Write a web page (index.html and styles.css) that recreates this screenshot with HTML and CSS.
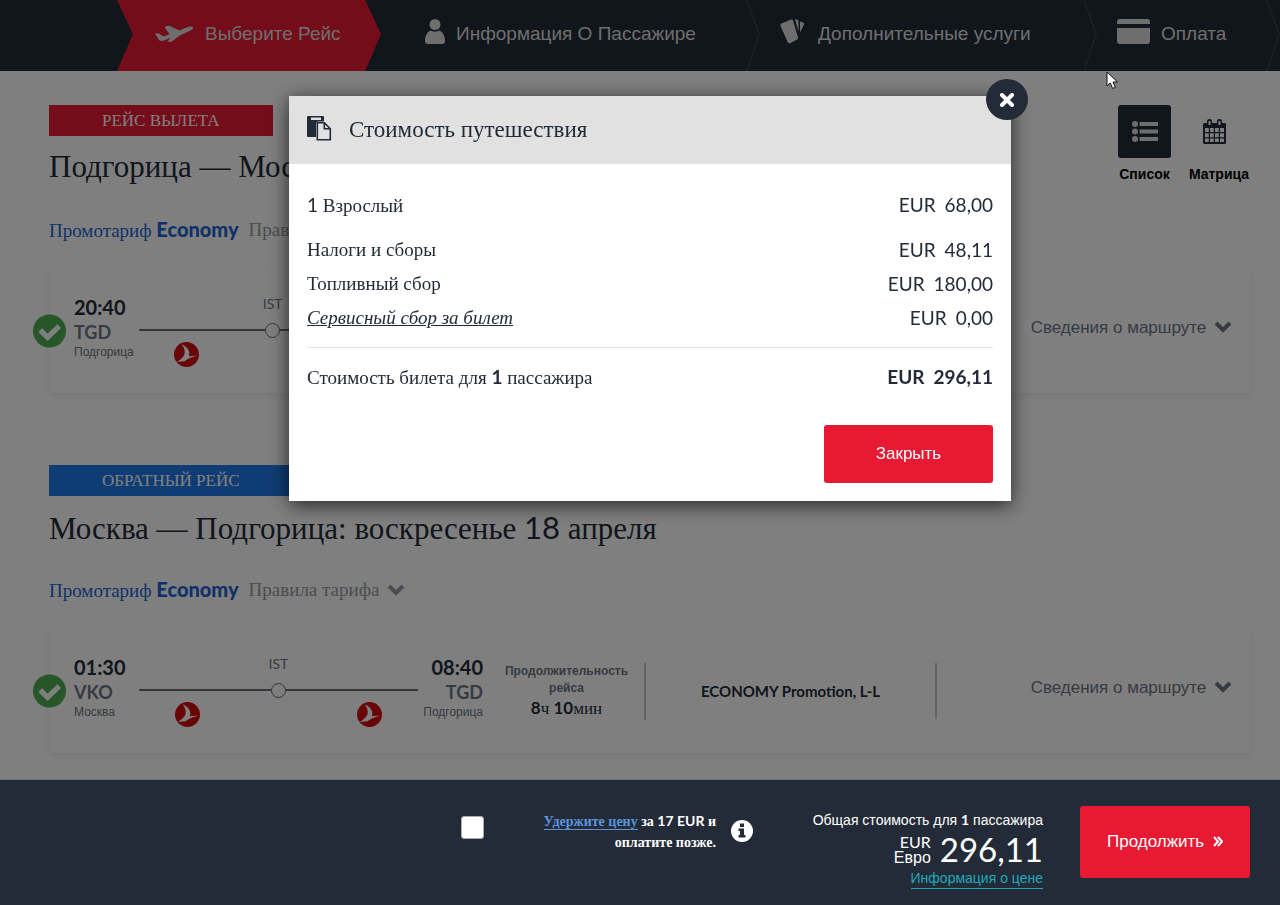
FILE: index.html
```html
<!DOCTYPE html>
<html lang="ru">
<head>
	<meta charset="utf-8">
	<meta name="viewport" content="width=device-width, initial-scale=1">
	<title>Выберите рейс</title>
	<link rel="stylesheet" href="styles.css">
</head>
<body>
	<!-- shared icons -->
	<svg class="sprite" aria-hidden="true">
		<symbol id="check" viewBox="0 0 34 34">
			<circle cx="17" cy="17" r="17" fill="#4fae53"/>
			<path d="M7.500 16l7.500 7.500L27 12" fill="none" stroke="#fff" stroke-width="5.500"/>
		</symbol>
		<symbol id="airline" viewBox="0 0 25 25">
			<circle cx="12.500" cy="12.500" r="12.500" fill="#d2090f"/>
			<path d="M7.500 2.500C13.500 4.500 16.500 9 15 14.200L23.500 13.500C18 15 13.500 16.500 10.500 19.200L2.500 20C6 18 9.500 15.500 10.500 12C11.300 8.500 10 5 7.500 2.500z" fill="#fff"/>
		</symbol>
		<symbol id="chevron" viewBox="0 0 18 12">
			<path d="M2 2l7 7 7-7" fill="none" stroke="currentColor" stroke-width="4"/>
		</symbol>
	</svg>

	<nav class="steps">
		<a href="#" class="step step-active">
			<svg class="icon-plane" viewBox="0 0 38 18"><path d="M0 8.500l3.500-.300 5 3.300 6-2.300L9.500 2l4-1.500 11 5 7-3c3-1.200 6-1.200 6.500 0 .4 1.300-1.500 2.600-4 3.700L24 11l-7 5.500-4.500.5 3-4.200L9 15.500c-2 .7-4 .5-5-.6z"/></svg>
			<span>Выберите Рейс</span>
		</a>
		<a href="#" class="step step-passenger">
			<svg class="icon-user" viewBox="0 0 20 25"><circle cx="10" cy="5.500" r="5.500"/><path d="M5.500 11.500c3 1.500 6 1.500 9 0C18 13 20 17 20 22q0 3-3 3H3q-3 0-3-3c0-5 2-9 5.500-10.500z"/></svg>
			<span>Информация О Пассажире</span>
			<svg class="divider" viewBox="0 0 14 71" preserveAspectRatio="none"><path d="M1 0l12 34L1 71"/></svg>
		</a>
		<a href="#" class="step step-extras">
			<svg class="icon-cards" viewBox="0 0 25 25"><path d="M1.500 4.500L11 .5q1.500-.5 2 1l5 17q.4 1.300-1 2l-7 3.800q-1.500.6-2.200-1L.5 7q-.5-1.800 1-2.500zM15 0l2.500.8q1 .5 1 1.700v10zM20 2.500l3 1q1.500.6 1 2l-4 8z"/></svg>
			<span>Дополнительные услуги</span>
			<svg class="divider" viewBox="0 0 14 71" preserveAspectRatio="none"><path d="M1 0l12 34L1 71"/></svg>
		</a>
		<a href="#" class="step step-payment">
			<svg class="icon-card" viewBox="0 0 33 25"><path d="M0 5V3q0-3 3-3h27q3 0 3 3v2zM0 9h33v13q0 3-3 3H3q-3 0-3-3z"/></svg>
			<span>Оплата</span>
			<svg class="divider" viewBox="0 0 14 71" preserveAspectRatio="none"><path d="M1 0l12 34L1 71"/></svg>
		</a>
	</nav>

	<main class="flights">
		<section class="flight">
			<div class="flight-top">
				<div>
					<span class="badge badge-red">РЕЙС ВЫЛЕТА</span>
					<h2>Подгорица — Москва</h2>
				</div>
				<div class="views">
					<button type="button" class="view view-active">
						<span class="view-icon"><svg width="26" height="21" viewBox="0 0 26 21"><circle cx="3" cy="3" r="3"/><circle cx="3" cy="10.500" r="3"/><circle cx="3" cy="18" r="3"/><path d="M7.500 1H26v4H7.500zM7.500 8.500H26v4H7.500zM7.500 16H26v4H7.500z"/></svg></span>
						<span>Список</span>
					</button>
					<button type="button" class="view">
						<span class="view-icon"><svg width="23" height="25" viewBox="0 0 23 25"><path fill-rule="evenodd" d="M1 4h3V2q0-2 2.500-2T9 2v2h5V2q0-2 2.500-2T19 2v2h3l1 1v19l-1 1H1l-1-1V5zM5.500 2v4h2V2zM15.500 2v4h2V2zM2 9v4h3.800V9zM7 9v4h3.800V9zM12 9v4h3.800V9zM17 9v4h4V9zM2 14.200v4h3.800v-4zM7 14.200v4h3.800v-4zM12 14.200v4h3.800v-4zM17 14.200v4h4v-4zM2 19.400V23h3.800v-3.600zM7 19.400V23h3.800v-3.600zM12 19.400V23h3.800v-3.600zM17 19.400V23h4v-3.600z"/></svg></span>
						<span>Матрица</span>
					</button>
				</div>
			</div>
			<div class="fare">
				<span class="fare-name">Промотариф <b>Economy</b></span>
				<a href="#">Правила тарифа <svg class="chevron"><use href="#chevron"/></svg></a>
			</div>
			<article class="card">
				<svg class="check"><use href="#check"/></svg>
				<div class="route">
					<div class="stop">
						<b>20:40</b>
						<span class="code">TGD</span>
						<span class="city">Подгорица</span>
					</div>
					<div class="path">
						<span class="via">IST</span>
						<div class="line"><i></i></div>
						<div class="logos"><svg><use href="#airline"/></svg><svg><use href="#airline"/></svg></div>
					</div>
					<div class="stop stop-end">
						<b>05:20 <small>+1</small></b>
						<span class="code">VKO</span>
						<span class="city">Москва</span>
					</div>
				</div>
				<div class="duration">
					<span>Продолжительность рейса</span>
					<p><b>8</b>ч <b>40</b>мин</p>
				</div>
				<div class="booking">ECONOMY Promotion, P-P</div>
				<a href="#" class="details">Сведения о маршруте <svg class="chevron"><use href="#chevron"/></svg></a>
			</article>
		</section>

		<section class="flight">
			<div class="flight-top">
				<div>
					<span class="badge badge-blue">ОБРАТНЫЙ РЕЙС</span>
					<h2>Москва — Подгорица: воскресенье <span class="latin">18</span> апреля</h2>
				</div>
			</div>
			<div class="fare">
				<span class="fare-name">Промотариф <b>Economy</b></span>
				<a href="#">Правила тарифа <svg class="chevron"><use href="#chevron"/></svg></a>
			</div>
			<article class="card">
				<svg class="check"><use href="#check"/></svg>
				<div class="route">
					<div class="stop">
						<b>01:30</b>
						<span class="code">VKO</span>
						<span class="city">Москва</span>
					</div>
					<div class="path">
						<span class="via">IST</span>
						<div class="line"><i></i></div>
						<div class="logos"><svg><use href="#airline"/></svg><svg><use href="#airline"/></svg></div>
					</div>
					<div class="stop stop-end">
						<b>08:40</b>
						<span class="code">TGD</span>
						<span class="city">Подгорица</span>
					</div>
				</div>
				<div class="duration">
					<span>Продолжительность рейса</span>
					<p><b>8</b>ч <b>10</b>мин</p>
				</div>
				<div class="booking">ECONOMY Promotion, L-L</div>
				<a href="#" class="details">Сведения о маршруте <svg class="chevron"><use href="#chevron"/></svg></a>
			</article>
		</section>
	</main>

	<div class="overlay"></div>

	<div class="modal" role="dialog" aria-labelledby="modal-title">
		<button type="button" class="modal-x" aria-label="Закрыть окно">
			<svg width="14" height="14" viewBox="0 0 14 14"><path d="M2 2l10 10M12 2L2 12" stroke="#fff" stroke-width="4" stroke-linecap="round"/></svg>
		</button>
		<header class="modal-head">
			<svg width="25" height="25" viewBox="0 0 25 25">
				<path fill="#232b38" fill-rule="evenodd" d="M1 0h15q1 0 1 1v4.500H11q-2 0-2 2V21H1q-1 0-1-1V1q0-1 1-1zM4 1.500V4h10V1.500z"/>
				<path d="M10.300 6.800h7l6 6V23.700H10.300zM17.300 6.800v6h6" fill="none" stroke="#232b38" stroke-width="1.600"/>
			</svg>
			<h3 id="modal-title">Стоимость путешествия</h3>
		</header>
		<div class="modal-body">
			<dl class="prices">
				<div class="price price-first"><dt><span class="latin">1</span> Взрослый</dt><dd><span>EUR</span> <span>68,00</span></dd></div>
				<div class="price"><dt>Налоги и сборы</dt><dd><span>EUR</span> <span>48,11</span></dd></div>
				<div class="price"><dt>Топливный сбор</dt><dd><span>EUR</span> <span>180,00</span></dd></div>
				<div class="price"><dt><a href="#">Сервисный сбор за билет</a></dt><dd><span>EUR</span> <span>0,00</span></dd></div>
				<div class="price price-total"><dt>Стоимость билета для <b class="latin">1</b> пассажира</dt><dd><span>EUR</span> <span>296,11</span></dd></div>
			</dl>
			<button type="button" class="btn btn-close">Закрыть</button>
		</div>
	</div>

	<footer class="summary">
		<input type="checkbox" id="hold">
		<label for="hold" class="hold"><a href="#">Удержите цену</a> за <span class="latin">17 EUR</span> и оплатите позже.</label>
		<svg class="info" width="22" height="22" viewBox="0 0 22 22"><circle cx="11" cy="11" r="11" fill="#fff"/><path d="M9 3.500h4V7H9zM7.500 8.500H13V15h1.500v2.500h-7V15H9v-4H7.500z" fill="#232b38"/></svg>
		<div class="total">
			<span>Общая стоимость для <b class="latin">1</b> пассажира</span>
			<div class="amount">
				<span class="currency"><span class="latin">EUR</span><br>Евро</span>
				<strong>296,11</strong>
			</div>
			<a href="#">Информация о цене</a>
		</div>
		<button type="button" class="btn btn-next">Продолжить <svg width="10" height="11" viewBox="0 0 10 11"><path d="M1 1l4 4.500L1 10M5 1l4 4.500L5 10" fill="none" stroke="#fff" stroke-width="2"/></svg></button>
	</footer>

	<svg class="pointer" width="13" height="19" viewBox="0 0 13 19"><path d="M1 1v14l3.300-3 2.400 5.500 2.600-1.100L7 11h4.500z" fill="#fff" stroke="#111" stroke-width="1"/></svg>
</body>
</html>
```
FILE: styles.css
```css
* {
	box-sizing: border-box;
}

body {
	margin: 0;
	height: 100vh;
	overflow: hidden;
	background: #fff;
	color: #232b38;
	font-family: "Liberation Serif", serif;
}

button {
	padding: 0;
	border: 0;
	background: none;
	cursor: pointer;
}

h2, h3, p, dl, dd {
	margin: 0;
}

.sprite {
	position: absolute;
	width: 0;
	height: 0;
}

.latin {
	font-family: Lato, sans-serif;
}

/* steps */
.steps {
	display: flex;
	height: 71px;
	padding-left: 117px;
	background: #232b38;
}

.step {
	position: relative;
	display: flex;
	align-items: center;
	padding-bottom: 3px;
	color: #ddd;
	font: 19px "Liberation Sans", sans-serif;
	text-decoration: none;
	white-space: nowrap;
	fill: #ddd;
}

.step-active {
	flex: 264 1 264px;
	gap: 12px;
	margin-right: -18px;
	padding-left: 38px;
	background: #e81932;
	clip-path: polygon(0 0, 94% 0, 100% 48%, 94% 100%, 0 100%, 6% 48%);
}

.step-passenger {
	flex: 383 1 383px;
	gap: 11px;
	padding-left: 62px;
}

.step-extras {
	flex: 337 1 337px;
	gap: 13px;
	padding-left: 34px;
}

.step-payment {
	flex: 197 1 197px;
	gap: 11px;
	padding-left: 34px;
}

.icon-plane { width: 38px; height: 18px; }
.icon-user { width: 20px; height: 25px; margin-bottom: 6px; }
.icon-cards { width: 25px; height: 25px; margin-bottom: 6px; }
.icon-card { width: 33px; height: 25px; margin-bottom: 6px; }

.divider {
	position: absolute;
	top: 0;
	right: -14px;
	width: 14px;
	height: 71px;
	fill: none;
	stroke: #333c4a;
	stroke-width: 2;
}

.step-payment .divider {
	right: 0;
}

/* flights */
.flights {
	padding: 34px 30px 0 49px;
}

.flight {
	height: 360px;
}

.flight-top {
	display: flex;
	justify-content: space-between;
	height: 95px;
}

.badge {
	display: inline-block;
	padding: 0 53px;
	color: #fff;
	font-size: 17px;
	line-height: 31px;
}

.badge-red { background: #e81932; }
.badge-blue { background: #2079e8; }

h2 {
	margin-top: 10px;
	font-size: 31px;
	font-weight: normal;
	line-height: 42px;
	white-space: nowrap;
}

.views {
	display: flex;
	gap: 17px;
}

.view {
	display: flex;
	flex-direction: column;
	gap: 8px;
	color: #000;
	font: bold 14px "Liberation Sans", sans-serif;
	fill: #232b38;
}

.view:last-child {
	min-width: 62px;
}

.view-icon {
	display: flex;
	align-items: center;
	justify-content: center;
	width: 53px;
	height: 53px;
	border-radius: 3px;
}

.view-active .view-icon {
	background: #232b38;
	fill: #ddd;
}

.fare {
	display: flex;
	gap: 10px;
	align-items: center;
	height: 60px;
	font-size: 19px;
}

.fare-name { color: #2064d2; }
.fare-name b { font: 900 20px/20px Lato, sans-serif; }

.fare a {
	color: #959ba5;
	text-decoration: none;
}

.chevron {
	width: 18px;
	height: 12px;
	margin-left: 3px;
}

.card {
	position: relative;
	display: grid;
	grid-template-columns: 446fr 151fr 291fr 313fr;
	align-items: center;
	height: 124px;
	margin-top: 9px;
	box-shadow: 0 3px 8px rgba(0, 0, 0, .08);
}

.check {
	position: absolute;
	top: 45px;
	left: -16px;
	width: 33px;
	height: 34px;
}

.route {
	display: flex;
	gap: 5px;
	padding: 0 12px 0 25px;
}

.stop {
	display: flex;
	flex-direction: column;
	min-width: 60px;
	font-family: Lato, sans-serif;
}

.stop-end {
	align-items: flex-end;
}

.stop b {
	font-size: 20px;
	line-height: 25px;
}

.stop small {
	font-size: 13px;
}

.code {
	color: #6d7683;
	font-size: 18px;
	font-weight: bold;
	line-height: 24px;
}

.city {
	color: #6d7683;
	font: 12px/17px "Liberation Sans", sans-serif;
}

.path {
	flex: 1;
}

.via {
	display: block;
	color: #6d7683;
	font: 14px/18px Lato, sans-serif;
	text-align: center;
}

.line {
	display: flex;
	align-items: center;
	justify-content: center;
	height: 34px;
	background: linear-gradient(#6a6f78, #6a6f78) center / 100% 2px no-repeat;
}

.line i {
	width: 15px;
	height: 15px;
	border: 1px solid #6a6f78;
	border-radius: 50%;
	background: #fff;
}

.logos {
	display: flex;
	justify-content: space-between;
	margin-top: -5px;
	padding: 0 13%;
}

.logos svg {
	width: 25px;
	height: 25px;
}

.duration {
	padding: 0 14px 0 8px;
	border-right: 2px solid #c9cbce;
	text-align: center;
}

.duration span {
	display: block;
	color: #6d7683;
	font: bold 12px/17px "Liberation Sans", sans-serif;
}

.duration p {
	font-size: 17px;
	line-height: 22px;
}

.duration b {
	font: bold 17px Lato, sans-serif;
}

.booking {
	border-right: 2px solid #c9cbce;
	font: bold 15px/56px Lato, sans-serif;
	text-align: center;
}

.details {
	padding: 0 18px 7px 0;
	color: #6d7683;
	font: 17px "Liberation Sans", sans-serif;
	text-align: right;
	text-decoration: none;
}

/* modal */
.overlay {
	position: fixed;
	inset: 0;
	background: rgba(0, 0, 0, .5);
}

.modal {
	position: fixed;
	top: 96px;
	left: calc(50% + 10px);
	width: 722px;
	max-width: 90%;
	transform: translateX(-50%);
	background: #fff;
	box-shadow: 0 4px 18px rgba(0, 0, 0, .7);
}

.modal-x {
	position: absolute;
	top: -17px;
	right: -17px;
	display: flex;
	align-items: center;
	justify-content: center;
	width: 42px;
	height: 41px;
	border-radius: 50%;
	background: #232b38;
}

.modal-head {
	display: flex;
	gap: 17px;
	align-items: center;
	height: 68px;
	padding: 0 18px;
	background: #e1e1e1;
}

.modal-head svg {
	margin-bottom: 4px;
}

.modal-head h3 {
	font-size: 23px;
	font-weight: normal;
}

.modal-body {
	display: flex;
	flex-direction: column;
	padding: 24px 18px 18px;
}

.price {
	display: flex;
	justify-content: space-between;
	font-size: 19px;
	line-height: 34px;
}

.price dd {
	display: flex;
	gap: 9px;
	font: 19px/34px Lato, sans-serif;
}

.price a {
	color: inherit;
	font-style: italic;
}

.price-first {
	height: 34px;
	margin-bottom: 11px;
}

.price-total {
	margin-top: 12px;
	padding-top: 12px;
	border-top: 1px solid #e4e4e4;
}

.price-total dd {
	font-weight: bold;
}

.btn {
	border-radius: 3px;
	background: #e81932;
	color: #fff;
	font: 17px "Liberation Sans", sans-serif;
}

.btn-close {
	align-self: flex-end;
	width: 169px;
	height: 58px;
	margin-top: 30px;
}

/* bottom bar */
.summary {
	position: fixed;
	right: 0;
	bottom: 0;
	left: 0;
	display: flex;
	align-items: flex-start;
	justify-content: flex-end;
	padding: 26px 30px 16px;
	border-top: 1px solid #6f747c;
	background: #232b38;
	color: #fff;
}

.summary input {
	appearance: none;
	width: 23px;
	height: 23px;
	margin: 10px 0 0;
	border: 1px solid #aaa;
	border-radius: 3px;
	background: #fff;
}

.hold {
	width: 192px;
	margin: 4px 15px 0 40px;
	font-size: 14px;
	font-weight: bold;
	line-height: 21px;
	text-align: right;
}

.hold a {
	border-bottom: 1px solid #5b93dc;
	color: #5b93dc;
	text-decoration: none;
}

.info {
	margin: 14px 54px 0 0;
}

.total {
	display: flex;
	flex-direction: column;
	align-items: flex-end;
	min-width: 236px;
	margin-right: 37px;
	padding-top: 5px;
	font: 14px/18px "Liberation Sans", sans-serif;
}

.amount {
	display: flex;
	gap: 9px;
	align-items: center;
	height: 40px;
	text-align: right;
}

.currency {
	font-size: 16px;
	line-height: 15px;
}

.amount strong {
	font: 33px/40px Lato, sans-serif;
}

.total a {
	border-bottom: 1px solid #1fa9b8;
	color: #1fa9b8;
	line-height: 19px;
	text-decoration: none;
}

.btn-next {
	width: 170px;
	height: 72px;
}

.btn-next svg {
	margin-left: 4px;
}

.pointer {
	position: fixed;
	top: 71px;
	left: 1106px;
}
```
